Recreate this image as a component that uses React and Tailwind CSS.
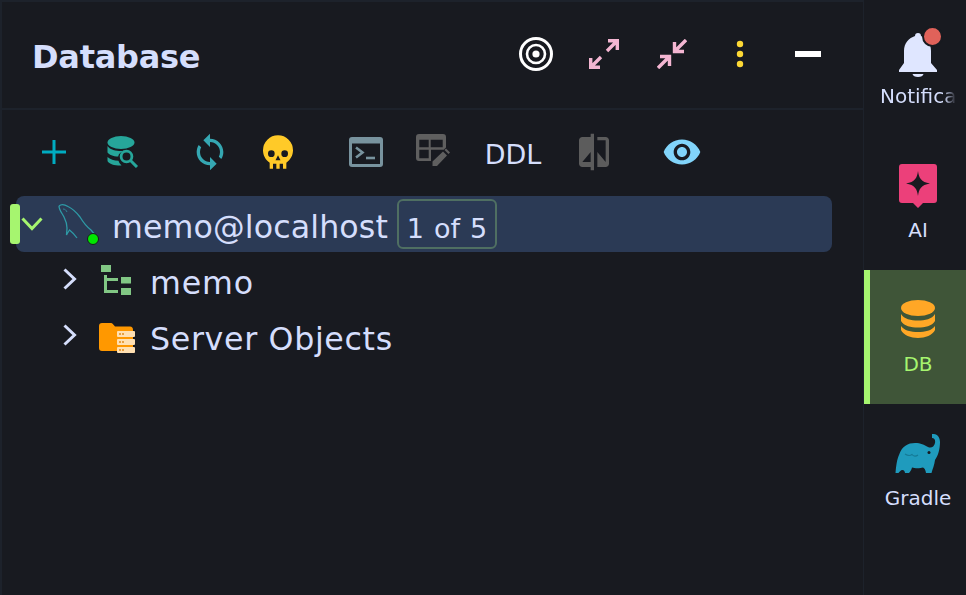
import React from 'react';

const font = { fontFamily: '"DejaVu Sans", sans-serif' };

// header icons
function TargetIcon() {
  return (
    <svg width="36" height="36" viewBox="0 0 36 36" fill="none" stroke="#fff">
      <circle cx="18" cy="18" r="15.5" strokeWidth="3" />
      <circle cx="18" cy="18" r="9" strokeWidth="2.6" />
      <circle cx="18" cy="18" r="3.6" fill="#fff" stroke="none" />
    </svg>
  );
}

function ExpandIcon() {
  return (
    <svg width="30" height="30" viewBox="0 0 30 30" fill="none" stroke="#f4b6d2" strokeWidth="3.4">
      <path d="M19 1.7H28.3V11M28 2L18 12M1.7 19V28.3H11M2 28L12 18" />
    </svg>
  );
}

function CollapseIcon() {
  return (
    <svg width="30" height="30" viewBox="0 0 30 30" fill="none" stroke="#f4b6d2" strokeWidth="3.4">
      <path d="M17.5 3V12.5H27M18 12L29 1M3 17.5H12.5V27M12 18L1 29" />
    </svg>
  );
}

function DotsIcon() {
  return (
    <svg width="10" height="30" viewBox="0 0 10 30" fill="#fdd835">
      <circle cx="5" cy="5" r="3.2" />
      <circle cx="5" cy="15" r="3.2" />
      <circle cx="5" cy="25" r="3.2" />
    </svg>
  );
}

// toolbar icons
function PlusIcon() {
  return (
    <svg width="24" height="24" viewBox="0 0 24 24" stroke="#00acc1" strokeWidth="3">
      <path d="M0 12H24M12 0V24" />
    </svg>
  );
}

function DbSearchIcon() {
  return (
    <svg width="32" height="32" viewBox="0 0 32 32">
      <ellipse cx="14" cy="6.5" rx="13.5" ry="6.5" fill="#26a69a" />
      <path d="M0.5 10C3 14 9 15 14 15C15.5 15 17 15 18 14.6C14 15.6 11.5 18 11.2 20.6C6 20.4 2 18.8 0.5 16.5Z" fill="#26a69a" />
      <path d="M0.5 21C3 23.5 7 24.6 11.5 24.8C12 26.6 13 28 14.5 29.4C13.4 29.6 12 29.6 11 29.5C5.5 29.2 0.5 27 0.5 24.5Z" fill="#26a69a" />
      <circle cx="19.5" cy="20.5" r="5.4" fill="none" stroke="#26a69a" strokeWidth="2.8" />
      <path d="M23.5 24.5L30 31" stroke="#26a69a" strokeWidth="3" />
    </svg>
  );
}

function SyncIcon() {
  return (
    <svg width="40" height="40" viewBox="0 0 24 24" fill="#35a7b2">
      <path d="M12 4V1L8 5l4 4V6c3.31 0 6 2.69 6 6 0 1.01-.25 1.97-.7 2.8l1.46 1.46C19.54 15.03 20 13.57 20 12c0-4.42-3.58-8-8-8zm0 14c-3.31 0-6-2.69-6-6 0-1.01.25-1.97.7-2.8L5.24 7.74C4.46 8.97 4 10.43 4 12c0 4.42 3.58 8 8 8v3l4-4-4-4v3z" />
    </svg>
  );
}

function SkullIcon() {
  return (
    <svg width="40" height="40" viewBox="0 0 24 24" fill="#ffca28">
      <path d="M12,2A9,9 0 0,0 3,11C3,14.03 4.53,16.82 7,18.47V22H9V19H11V22H13V19H15V22H17V18.46C19.47,16.81 21,14 21,11A9,9 0 0,0 12,2M8,11A2,2 0 0,1 10,13A2,2 0 0,1 8,15A2,2 0 0,1 6,13A2,2 0 0,1 8,11M16,11A2,2 0 0,1 18,13A2,2 0 0,1 16,15A2,2 0 0,1 14,13A2,2 0 0,1 16,11M12,14L13.5,17H10.5L12,14Z" />
    </svg>
  );
}

function TerminalIcon() {
  return (
    <svg width="34" height="30" viewBox="0 0 34 30">
      <rect width="34" height="30" rx="3" fill="#78939e" />
      <rect x="3" y="6.5" width="28" height="20.5" fill="#181a20" />
      <path d="M7 10.5L13.5 15.5L7 20.5" fill="none" stroke="#78939e" strokeWidth="2.6" />
      <path d="M17 21H26" stroke="#78939e" strokeWidth="2.6" />
    </svg>
  );
}

function TableEditIcon() {
  return (
    <svg width="34" height="32" viewBox="0 0 34 32" fill="#5f5f5f">
      <path
        fillRule="evenodd"
        d="M3 0H27C29 0 30 1 30 3V13.5L27.8 15.7H15V27H3C1 27 0 26 0 24V3C0 1 1 0 3 0ZM3.3 5.7V13.3H12.7V5.7ZM14.7 5.7V13.3H26.7V5.7ZM3.3 15.7V24.3H12.7V15.7Z"
      />
      <path d="M16.5 32V27.5L27 17.5L31 21.5L21 32ZM28.5 16L30 14.5L34 18.5L32.5 20Z" />
    </svg>
  );
}

function CompareIcon() {
  return (
    <svg width="40" height="40" viewBox="0 0 24 24" fill="#5c5c5c">
      <path d="M10 3H5c-1.1 0-2 .9-2 2v14c0 1.1.9 2 2 2h5v2h2V1h-2v2zm0 15H5l5-6v6zm9-15h-5v2h5v13l-5-6v9h5c1.1 0 2-.9 2-2V5c0-1.1-.9-2-2-2z" />
    </svg>
  );
}

function EyeIcon() {
  return (
    <svg width="40" height="40" viewBox="0 0 24 24" fill="#81d4fa">
      <path d="M12 4.5C7 4.5 2.73 7.61 1 12c1.73 4.39 6 7.5 11 7.5s9.27-3.11 11-7.5c-1.73-4.39-6-7.5-11-7.5zM12 17c-2.76 0-5-2.24-5-5s2.24-5 5-5 5 2.24 5 5-2.24 5-5 5zm0-8c-1.66 0-3 1.34-3 3s1.34 3 3 3 3-1.34 3-3-1.34-3-3-3z" />
    </svg>
  );
}

// tree icons
function DolphinIcon() {
  return (
    <svg width="42" height="44" viewBox="0 0 42 44" fill="none" stroke="#2e9aa6" strokeWidth="1.3">
      <path d="M1 4C3 2 6 2 10 4.5C15 7 19 11 22 15C25 20 29 25 33 28C35 30 36.5 32 37 34" />
      <path d="M1 4C1 8 4 11 6 15C8 19 9 22 9 26C9 28 8.5 32 8.5 33C9.5 31 10.5 29.5 11.5 28C14 30 17 33 19 36" />
      <path d="M5 7C7 7 8 8 9 10" strokeWidth="0.8" />
    </svg>
  );
}

function SchemaIcon() {
  return (
    <svg width="30" height="30" viewBox="0 0 30 30" fill="#81c784">
      <rect width="10" height="7" />
      <rect x="20" y="12" width="10" height="6.5" />
      <rect x="20" y="23" width="10" height="7" />
      <path d="M3 10H6V13H17V16H6V25H17V28H3Z" />
    </svg>
  );
}

function ServerFolderIcon() {
  return (
    <svg width="36" height="30" viewBox="0 0 36 30">
      <path d="M3 0H12C13.5 0 14.5 2 16 3.5H31C33 3.5 34 5 34 7V26C34 27.5 33 28 31 28H3C1 28 0 27 0 25V3C0 1 1 0 3 0Z" fill="#ff9800" />
      <rect x="18" y="8" width="18" height="6" rx="1" fill="#ffe0b2" />
      <rect x="18" y="16" width="18" height="6" rx="1" fill="#ffe0b2" />
      <rect x="18" y="24" width="18" height="6" rx="1" fill="#ffe0b2" />
      <path d="M20 10H22V12H20ZM23 10H25V12H23ZM20 18H22V20H20ZM23 18H25V20H23ZM20 26H22V28H20ZM23 26H25V28H23Z" fill="#e8a040" />
    </svg>
  );
}

function Chevron() {
  return (
    <svg className="mb-[8px]" width="14" height="22" viewBox="0 0 14 22" fill="none" stroke="#d5defc" strokeWidth="3">
      <path d="M1.5 1.5L11.5 11L1.5 20.5" />
    </svg>
  );
}

// side bar icons
function BellIcon() {
  return (
    <div className="relative h-[48px] w-[40px]">
      <svg width="40" height="46" viewBox="0 0 40 46" fill="#dfe6ff">
        <path d="M20 2C22 2 23 3 23 5C29 7 33 12 33 20V32L39 39V41H1V39L6 32V20C6 12 11 7 17 5C17 3 18 2 20 2Z" />
        <path d="M14.5 43H25.5C25 45 23 46 20 46C17 46 15 45 14.5 43Z" />
      </svg>
      <span className="absolute left-[24px] top-[-5px] h-[21px] w-[21px] rounded-full border-[2px] border-[#181a20] bg-[#e0625a]" />
    </div>
  );
}

function AiIcon() {
  return (
    <svg width="38" height="44" viewBox="0 0 38 44">
      <path d="M3 0H35C37 0 38 1 38 3V36C38 38 37 39 35 39H24L19 44L14 39H3C1 39 0 38 0 36V3C0 1 1 0 3 0Z" fill="#ec407a" />
      <path d="M19 7C20 14 22 18 31 19.5C22 21 20 25 19 32C18 25 16 21 7 19.5C16 18 18 14 19 7Z" fill="#181a20" />
    </svg>
  );
}

function DbStackIcon() {
  return (
    <svg width="36" height="38" viewBox="0 0 36 38" fill="#ffa726">
      <ellipse cx="18" cy="8" rx="17" ry="8" />
      <path d="M1 14C4 19 11 20.5 18 20.5C25 20.5 32 19 35 14V21C32 26 25 27.5 18 27.5C11 27.5 4 26 1 21Z" />
      <path d="M1 26C4 30.5 11 32 18 32C25 32 32 30.5 35 26V30C33 35 25 38 18 38C11 38 3 35 1 30Z" />
    </svg>
  );
}

function GradleIcon() {
  return (
    <svg width="46" height="40" viewBox="0 0 46 40" fill="#1f9bbd">
      <path d="M37 0C42 -0.5 45 3 45 8C45 15 43 22 40 26C39.5 31 37.5 35 36.5 39H31C30.5 36 29.5 34 28 33.5C25 34.5 20 34.5 17 33.5C16.5 36 15 38 14 39H10C10 37.5 9 36 7.5 36C5.5 36 4.5 38 3.5 39H0.5C1 33 2 25 4 21C7 12 13 9 20 9C26 9 29 11 33 13C36 14.5 39 13 40 9C40.5 6 39.5 4 37 4Z" />
      <circle cx="34" cy="18.5" r="1.5" fill="#181a20" />
      <path d="M10 20C13 22 15 22 17 20.5C18.5 22.5 21 22.5 23 21" fill="none" stroke="#157a96" strokeWidth="1.2" />
    </svg>
  );
}

const headerIcons = [TargetIcon, ExpandIcon, CollapseIcon, DotsIcon];

function App() {
  return (
    <div className="flex h-[595px] w-[966px] overflow-hidden bg-[#181a20] text-[#d5defc]" style={font}>
      {/* Database panel */}
      <div className="flex w-[863px] flex-col border-l-2 border-t-2 border-[#1d222b]">
        <div className="flex h-[108px] shrink-0 items-center justify-between border-b-2 border-[#1d222b] pb-[2px] pl-[30px] pr-[21px]">
          <h1 className="pt-[6px] text-[32px] font-bold leading-none tracking-[-0.25px] text-[#d5defc]">Database</h1>
          <div className="flex items-center">
            {headerIcons.map((Icon, i) => (
              <div key={i} className="flex w-[68px] items-center justify-center">
                <Icon />
              </div>
            ))}
            <div className="flex w-[68px] items-center justify-center">
              <div className="h-[6px] w-[26px] bg-white" />
            </div>
          </div>
        </div>

        {/* Toolbar */}
        <div className="flex h-[84px] shrink-0 items-center pl-[32px]">
          <div className="flex w-[40px] justify-center"><PlusIcon /></div>
          <div className="ml-[29px] flex w-[40px] justify-center"><DbSearchIcon /></div>
          <div className="ml-[47px] flex w-[40px] justify-center"><SyncIcon /></div>
          <div className="ml-[28px] flex w-[40px] justify-center"><SkullIcon /></div>
          <div className="ml-[48px] flex w-[40px] justify-center"><TerminalIcon /></div>
          <div className="ml-[27px] mb-[4px] flex w-[40px] justify-center"><TableEditIcon /></div>
          <div className="ml-[30px] w-[60px] pt-[4px] text-center text-[27px] leading-none">DDL</div>
          <div className="ml-[31px] flex w-[40px] justify-center"><CompareIcon /></div>
          <div className="ml-[48px] flex w-[40px] justify-center"><EyeIcon /></div>
        </div>

        {/* Tree */}
        <div className="mt-[2px] flex flex-col">
          <div className="relative ml-[14px] flex h-[56px] w-[816px] items-center rounded-[8px] bg-[#2b3a55]">
            <span className="absolute left-[-6px] top-[8px] h-[40px] w-[10px] rounded-[3px] bg-[#a6f56f]" />
            <svg className="ml-[5px]" width="22" height="14" viewBox="0 0 22 14" fill="none" stroke="#a6f56f" strokeWidth="3">
              <path d="M1.5 1.5L11 11.5L20.5 1.5" />
            </svg>
            <div className="relative ml-[15px] h-[44px] w-[42px]">
              <DolphinIcon />
              <span className="absolute left-[29px] top-[31px] h-[12px] w-[12px] rounded-full border border-[#181a20] bg-[#00e600]" />
            </div>
            <span className="ml-[12px] pt-[8px] text-[31.7px] leading-none tracking-[0.1px]">memo@localhost</span>
            <span className="ml-[9px] flex h-[50px] w-[100px] items-center justify-center rounded-[6px] border-2 border-[#4f6f62] pt-[8px] text-[27px] leading-none [word-spacing:1.5px]">
              1 of 5
            </span>
          </div>
          <div className="mt-[3px] flex h-[56px] items-center pl-[61px]">
            <Chevron />
            <div className="mb-[6px] ml-[24px]"><SchemaIcon /></div>
            <span className="ml-[19px] pt-[2px] text-[31.7px] leading-none tracking-[0.8px]">memo</span>
          </div>
          <div className="flex h-[56px] items-center pl-[61px]">
            <Chevron />
            <div className="mb-[2px] ml-[22px]"><ServerFolderIcon /></div>
            <span className="ml-[15px] pt-[2px] text-[31.7px] leading-none tracking-[0.65px]">Server Objects</span>
          </div>
        </div>
      </div>

      {/* Tool window bar */}
      <div className="flex flex-1 flex-col border-l border-[#1d222b] pt-[2px]">
        <div className="flex h-[134px] flex-col items-center border-l-[6px] border-transparent pt-[29px]">
          <BellIcon />
          <div className="mt-[4px] w-[76px] overflow-hidden whitespace-nowrap text-[20px] leading-[26px] [mask-image:linear-gradient(to_right,black_84%,transparent)]">
            Notification
          </div>
        </div>
        <div className="flex h-[134px] flex-col items-center border-l-[6px] border-transparent pt-[28px]">
          <AiIcon />
          <div className="mt-[9px] text-[20px] leading-[26px]">AI</div>
        </div>
        <div className="flex h-[134px] flex-col items-center border-l-[6px] border-[#a6f56f] bg-[#3f5538] pt-[30px]">
          <DbStackIcon />
          <div className="mt-[13px] text-[20px] leading-[26px] text-[#a6f56f]">DB</div>
        </div>
        <div className="flex h-[134px] flex-col items-center border-l-[6px] border-transparent pt-[30px]">
          <GradleIcon />
          <div className="mt-[11px] text-[20px] leading-[26px]">Gradle</div>
        </div>
      </div>
    </div>
  );
}

export default App;
